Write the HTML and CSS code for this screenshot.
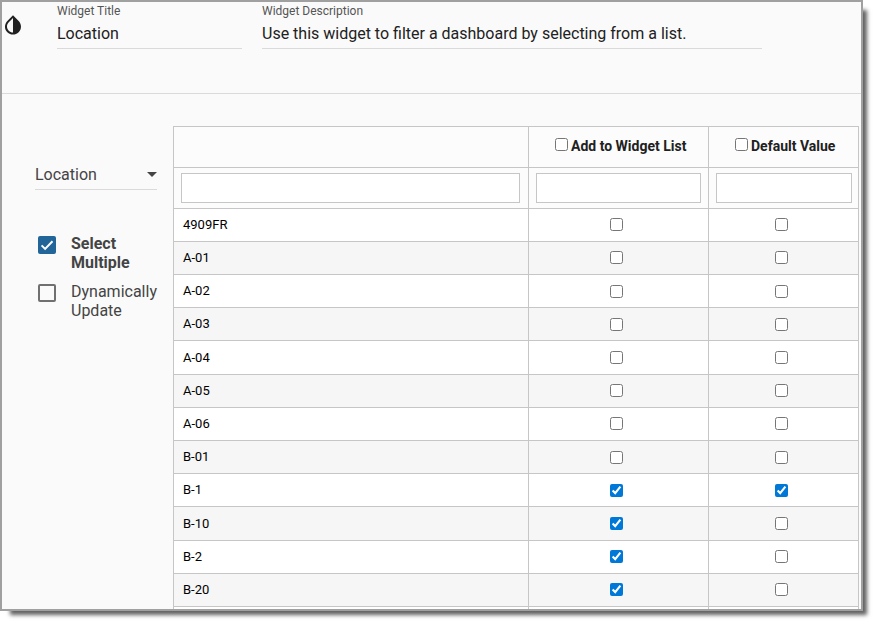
FILE: index.html
```html
<!DOCTYPE html>
<html lang="en">
<head>
    <meta charset="UTF-8">
    <meta name="viewport" content="width=device-width, initial-scale=1.0">
    <title>Widget Settings</title>
    <link rel="stylesheet" href="styles.css">
</head>
<body>
    <div class="window">
        <header class="header">
            <svg class="drop" width="24" height="24" viewBox="0 0 24 24">
                <path fill="#212121" d="M17.66 7.93L12 2.27 6.34 7.93c-3.12 3.12-3.12 8.19 0 11.31C7.9 20.8 9.95 21.58 12 21.58s4.1-.78 5.66-2.34c3.12-3.12 3.12-8.19 0-11.31zM12 19.59c-1.6 0-3.11-.62-4.24-1.76C6.62 16.69 6 15.19 6 13.59s.62-3.11 1.76-4.24L12 5.1v14.49z"/>
            </svg>
            <div class="field title">
                <div class="field-label">Widget Title</div>
                <div class="field-value">Location</div>
            </div>
            <div class="field description">
                <div class="field-label">Widget Description</div>
                <div class="field-value">Use this widget to filter a dashboard by selecting from a list.</div>
            </div>
        </header>
        <main class="main">
            <aside class="sidebar">
                <div class="select">
                    <span>Location</span>
                    <span class="arrow"></span>
                </div>
                <div class="option selected">
                    <span class="box">
                        <svg width="18" height="18" viewBox="0 0 18 18"><path d="M3.6 9.4l3.5 3.5 7.4-7.6" fill="none" stroke="#fff" stroke-width="2"/></svg>
                    </span>
                    <span>Select<br>Multiple</span>
                </div>
                <div class="option">
                    <span class="box"></span>
                    <span>Dynamically<br>Update</span>
                </div>
            </aside>
            <div class="table">
                <div class="row head">
                    <div class="cell"></div>
                    <label class="cell"><input type="checkbox">Add to Widget List</label>
                    <label class="cell"><input type="checkbox">Default Value</label>
                </div>
                <div class="row filter">
                    <div class="cell"><input type="text"></div>
                    <div class="cell"><input type="text"></div>
                    <div class="cell"><input type="text"></div>
                </div>
                <div class="row">
                    <div class="cell name">4909FR</div>
                    <div class="cell check"><input type="checkbox"></div>
                    <div class="cell check"><input type="checkbox"></div>
                </div>
                <div class="row alt">
                    <div class="cell name">A-01</div>
                    <div class="cell check"><input type="checkbox"></div>
                    <div class="cell check"><input type="checkbox"></div>
                </div>
                <div class="row">
                    <div class="cell name">A-02</div>
                    <div class="cell check"><input type="checkbox"></div>
                    <div class="cell check"><input type="checkbox"></div>
                </div>
                <div class="row alt">
                    <div class="cell name">A-03</div>
                    <div class="cell check"><input type="checkbox"></div>
                    <div class="cell check"><input type="checkbox"></div>
                </div>
                <div class="row">
                    <div class="cell name">A-04</div>
                    <div class="cell check"><input type="checkbox"></div>
                    <div class="cell check"><input type="checkbox"></div>
                </div>
                <div class="row alt">
                    <div class="cell name">A-05</div>
                    <div class="cell check"><input type="checkbox"></div>
                    <div class="cell check"><input type="checkbox"></div>
                </div>
                <div class="row">
                    <div class="cell name">A-06</div>
                    <div class="cell check"><input type="checkbox"></div>
                    <div class="cell check"><input type="checkbox"></div>
                </div>
                <div class="row alt">
                    <div class="cell name">B-01</div>
                    <div class="cell check"><input type="checkbox"></div>
                    <div class="cell check"><input type="checkbox"></div>
                </div>
                <div class="row">
                    <div class="cell name">B-1</div>
                    <div class="cell check"><input type="checkbox" checked></div>
                    <div class="cell check"><input type="checkbox" checked></div>
                </div>
                <div class="row alt">
                    <div class="cell name">B-10</div>
                    <div class="cell check"><input type="checkbox" checked></div>
                    <div class="cell check"><input type="checkbox"></div>
                </div>
                <div class="row">
                    <div class="cell name">B-2</div>
                    <div class="cell check"><input type="checkbox" checked></div>
                    <div class="cell check"><input type="checkbox"></div>
                </div>
                <div class="row alt">
                    <div class="cell name">B-20</div>
                    <div class="cell check"><input type="checkbox" checked></div>
                    <div class="cell check"><input type="checkbox"></div>
                </div>
                <div class="row">
                    <div class="cell name"></div>
                    <div class="cell"></div>
                    <div class="cell"></div>
                </div>
            </div>
        </main>
    </div>
</body>
</html>
```

FILE: styles.css
```css
* {
    box-sizing: border-box;
}
body {
    margin: 0;
    min-height: 100vh;
    background-color: #fff;
    font-family: Roboto, Arial, sans-serif;
}
.window {
    width: 863px;
    height: 611px;
    border: 2px solid #a0a0a0;
    background-color: #fafafa;
    box-shadow: 7px 7px 4px -3px rgba(0, 0, 0, 0.62);
    overflow: hidden;
}
.header {
    display: flex;
    height: 92px;
    border-bottom: 1px solid #dadada;
}
.drop {
    flex: none;
    margin: 11px 32px 0 -1px;
}
.field {
    height: 47px;
    border-bottom: 1px solid #dadada;
}
.title {
    width: 185px;
    margin-right: 20px;
}
.description {
    width: 500px;
}
.field-label {
    padding-top: 2px;
    font-size: 12px;
    line-height: 14px;
    color: #555;
}
.field-value {
    padding-top: 6px;
    font-size: 16px;
    line-height: 19px;
    color: #212121;
}
.main {
    display: flex;
    align-items: flex-start;
    padding-top: 32px;
}
.sidebar {
    flex: none;
    width: 171px;
    padding: 39px 16px 0 33px;
    font-size: 16px;
    line-height: 19px;
    color: #444;
}
.select {
    display: flex;
    justify-content: space-between;
    height: 25px;
    margin-bottom: 44px;
    border-bottom: 1px solid #dadada;
}
.arrow {
    width: 9px;
    height: 5px;
    margin-top: 7px;
    border: 5px solid transparent;
    border-top-color: #444;
    border-bottom: 0;
}
.option {
    display: flex;
    gap: 15px;
    margin-bottom: 10px;
    padding-left: 3px;
}
.selected {
    font-weight: 700;
}
.box {
    flex: none;
    width: 18px;
    height: 18px;
    margin-top: 2px;
    border: 2px solid #707070;
    border-radius: 2px;
}
.selected .box {
    border: 0;
    background-color: #226699;
}
.box svg {
    display: block;
}
.table {
    width: 686px;
    border: 1px solid #c6c6c6;
    border-width: 1px 0 0 1px;
    font-size: 13px;
    color: #000;
}
.row {
    display: grid;
    grid-template-columns: 355px 180px 150px;
    height: 33.21px;
    border-bottom: 1px solid #c6c6c6;
    background-color: #fff;
}
.alt {
    background-color: #f6f6f6;
}
.head,
.filter {
    height: 40.8px;
    background-color: #fcfcfc;
}
.cell {
    display: flex;
    align-items: center;
    border-right: 1px solid #c6c6c6;
}
.name {
    padding: 0 0 0.8px 9px;
}
.check {
    justify-content: center;
    padding-right: 4px;
}
.head .cell {
    padding: 0 0 2px 26px;
    font-size: 14px;
    font-weight: 700;
    color: #212121;
}
.filter .cell {
    align-items: flex-start;
    padding: 5px 7px 0;
}
.filter .cell:first-child {
    padding-right: 8px;
}
.filter .cell:last-child {
    padding-right: 6px;
}
input[type="checkbox"] {
    width: 13px;
    height: 13px;
    margin: 0;
    accent-color: #0078d7;
}
.head input[type="checkbox"] {
    margin: -3px 3px 0 0;
}
input[type="text"] {
    width: 100%;
    height: 30px;
    border: 1px solid #c6c6c6;
    background-color: #fff;
}
```
